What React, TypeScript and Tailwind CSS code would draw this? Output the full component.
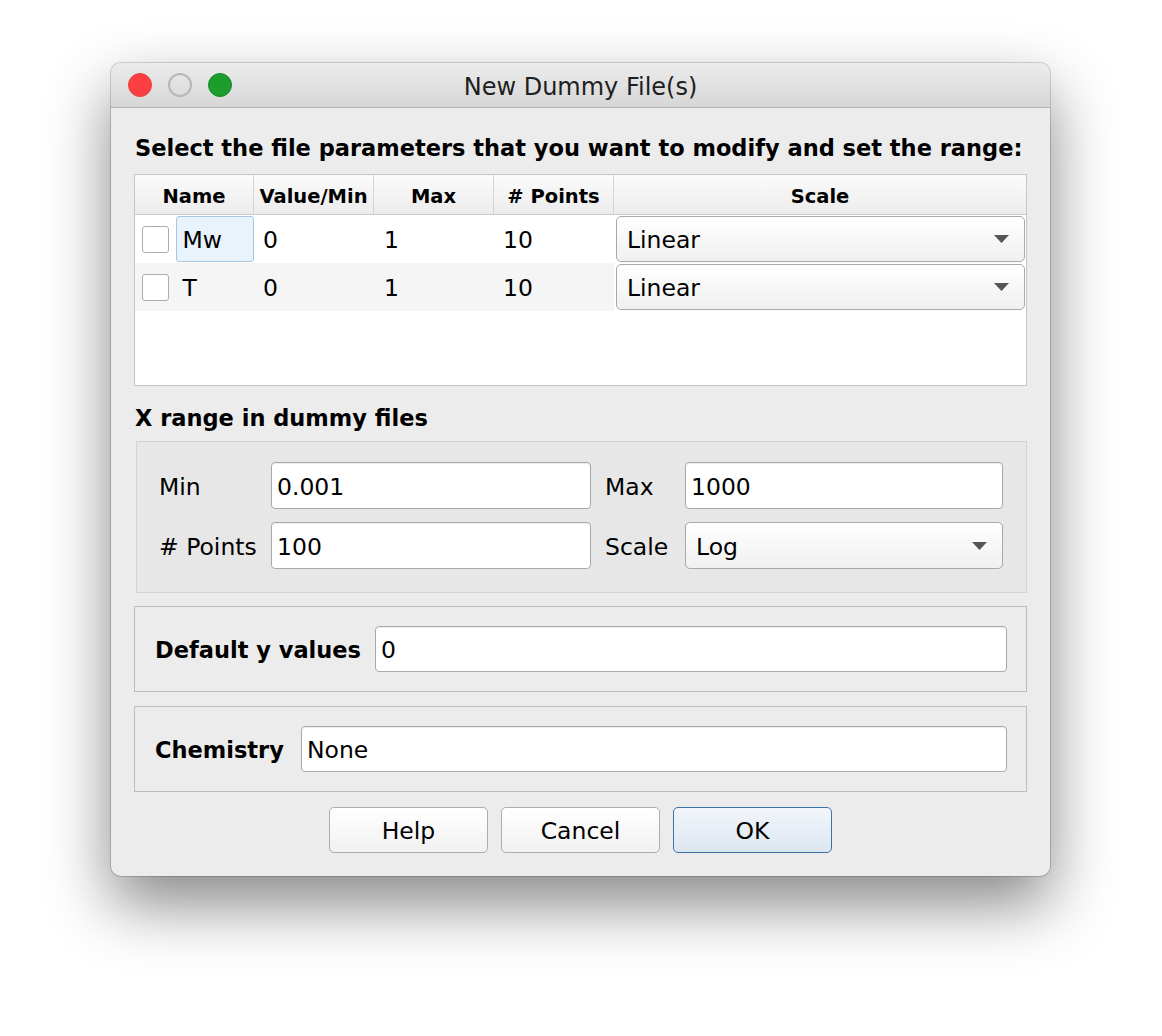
import React from 'react';

// small down-pointing triangle used by the combo boxes
const Arrow = () => (
  <svg width="15" height="8" viewBox="0 0 15 8">
    <path d="M0 0h15L7.5 8z" fill="#555555" />
  </svg>
);

interface BoxProps {
  value: string;
  className?: string;
}

const Combo: React.FC<BoxProps> = ({ value, className = '' }) => (
  <div
    className={`flex items-center justify-between rounded-[5px] border border-[#a8a8a8] bg-linear-to-b from-white to-[#f0f0f0] pl-[10px] pr-[15px] ${className}`}
  >
    <span className="pt-[4px]">{value}</span>
    <Arrow />
  </div>
);

const Field: React.FC<BoxProps> = ({ value, className = '' }) => (
  <div
    className={`flex items-center rounded-[4px] border border-[#a9a9a9] bg-white pl-[5px] pt-[4px] shadow-[inset_0_1px_1px_rgba(0,0,0,0.07)] ${className}`}
  >
    {value}
  </div>
);

const Button: React.FC<{ label: string; primary?: boolean }> = ({ label, primary }) => (
  <div
    className={
      primary
        ? 'flex h-[46px] w-[159px] items-center justify-center rounded-[5px] border border-[#3a72ab] bg-linear-to-b from-[#f2f6fa] to-[#dde6f0] pt-[4px]'
        : 'flex h-[46px] w-[159px] items-center justify-center rounded-[5px] border border-[#adadad] bg-linear-to-b from-white to-[#f1f1f1] pt-[4px]'
    }
  >
    {label}
  </div>
);

const Checkbox = () => (
  <div className="h-[27px] w-[28px] rounded-[3px] border border-[#acacac] bg-white" />
);

const rows = [
  { name: 'Mw', min: '0', max: '1', points: '10', scale: 'Linear', editing: true },
  { name: 'T', min: '0', max: '1', points: '10', scale: 'Linear', editing: false },
];

export default function App() {
  return (
    <div className="min-h-[1036px] w-full bg-white pl-[111px] pt-[63px] font-['DejaVu_Sans',sans-serif] text-[23.5px] text-black">
      <div className="flex h-[813px] w-[939px] flex-col overflow-hidden rounded-[10px] bg-[#ececec] shadow-[0_0_0_1px_rgba(0,0,0,0.16),0_28px_64px_rgba(0,0,0,0.48)]">
        {/* Title bar */}
        <div className="grid h-[45px] shrink-0 grid-cols-[1fr_auto_1fr] items-center border-b border-[#b3b3b3] bg-linear-to-b from-[#ececec] to-[#d6d6d6]">
          <div className="flex items-center gap-[16px] pl-[17px]">
            <div className="h-[24px] w-[24px] rounded-full border border-[#e0443e] bg-[#fc3f43]" />
            <div className="h-[24px] w-[24px] rounded-full border-2 border-[#b7b7b7]" />
            <div className="h-[24px] w-[24px] rounded-full border border-[#17892a] bg-[#1c9d2d]" />
          </div>
          <div className="pt-[4px] text-[24px] text-[#1e1e1e]">New Dummy File(s)</div>
          <div />
        </div>

        <div className="flex flex-col px-[23px]">
          <div className="mt-[25px] pl-[1px] pt-[1px] text-[22.5px] font-bold leading-[29px]">
            Select the file parameters that you want to modify and set the range:
          </div>

          {/* Parameter table */}
          <div className="mt-[11px] flex h-[212px] flex-col border border-[#c6c6c6] bg-white">
            <div className="grid h-[40px] grid-cols-[119px_120px_120px_120px_1fr] border-b border-[#c9c9c9] bg-linear-to-b from-[#fbfbfb] to-[#ececec] text-[19.5px] font-bold">
              {['Name', 'Value/Min', 'Max', '# Points'].map((h) => (
                <div key={h} className="flex items-center justify-center border-r border-[#d4d4d4] pt-[4px]">
                  {h}
                </div>
              ))}
              <div className="flex items-center justify-center pt-[4px]">Scale</div>
            </div>
            {rows.map((r, i) => (
              <div
                key={r.name}
                className={
                  i % 2 === 1
                    ? 'grid h-[48px] grid-cols-[119px_120px_120px_120px_1fr] bg-[#f5f5f5]'
                    : 'grid h-[48px] grid-cols-[119px_120px_120px_120px_1fr]'
                }
              >
                <div className="flex items-center pl-[7px]">
                  <Checkbox />
                  {r.editing ? (
                    <div className="ml-[7px] flex h-[46px] w-[79px] items-center rounded-[3px] border border-[#a6c6e2] bg-[#e9f3fc] pl-[5px] pt-[4px]">
                      {r.name}
                    </div>
                  ) : (
                    <div className="ml-[7px] flex h-[46px] w-[79px] items-center pl-[6px] pt-[4px]">{r.name}</div>
                  )}
                </div>
                <div className="flex items-center pl-[9px] pt-[4px]">{r.min}</div>
                <div className="flex items-center pl-[10px] pt-[4px]">{r.max}</div>
                <div className="flex items-center pl-[9px] pt-[4px]">{r.points}</div>
                <div className="flex items-center bg-white pl-[2px] pr-[1px]">
                  <Combo value={r.scale} className="h-[46px] w-full" />
                </div>
              </div>
            ))}
          </div>

          {/* X range */}
          <div className="mt-[17px] pl-[1px] pt-[1px] text-[22.5px] font-bold leading-[29px]">X range in dummy files</div>
          <div className="ml-[2px] mt-[8px] h-[152px] border border-[#d3d3d3] bg-[#e7e7e7] pl-[22px] pt-[20px]">
            <div className="grid grid-cols-[112px_320px_94px_318px] gap-y-[13px]">
              <div className="flex h-[47px] items-center pt-[4px]">Min</div>
              <Field value="0.001" className="h-[47px]" />
              <div className="flex h-[47px] items-center pl-[14px] pt-[4px]">Max</div>
              <Field value="1000" className="h-[47px]" />
              <div className="flex h-[47px] items-center pt-[4px]"># Points</div>
              <Field value="100" className="h-[47px]" />
              <div className="flex h-[47px] items-center pl-[14px] pt-[4px]">Scale</div>
              <Combo value="Log" className="h-[47px]" />
            </div>
          </div>

          {/* Default y values */}
          <div className="mt-[13px] flex h-[86px] items-center border border-[#bdbdbd] pl-[20px] pr-[19px]">
            <div className="w-[220px] shrink-0 pt-[4px] text-[22.5px] font-bold">Default y values</div>
            <Field value="0" className="h-[46px] flex-1" />
          </div>

          {/* Chemistry */}
          <div className="mt-[14px] flex h-[86px] items-center border border-[#bdbdbd] pl-[20px] pr-[19px]">
            <div className="w-[146px] shrink-0 pt-[4px] text-[22.5px] font-bold">Chemistry</div>
            <Field value="None" className="h-[46px] flex-1" />
          </div>

          {/* Buttons */}
          <div className="mt-[15px] flex justify-center gap-[13px]">
            <Button label="Help" />
            <Button label="Cancel" />
            <Button label="OK" primary />
          </div>
        </div>
      </div>
    </div>
  );
}
